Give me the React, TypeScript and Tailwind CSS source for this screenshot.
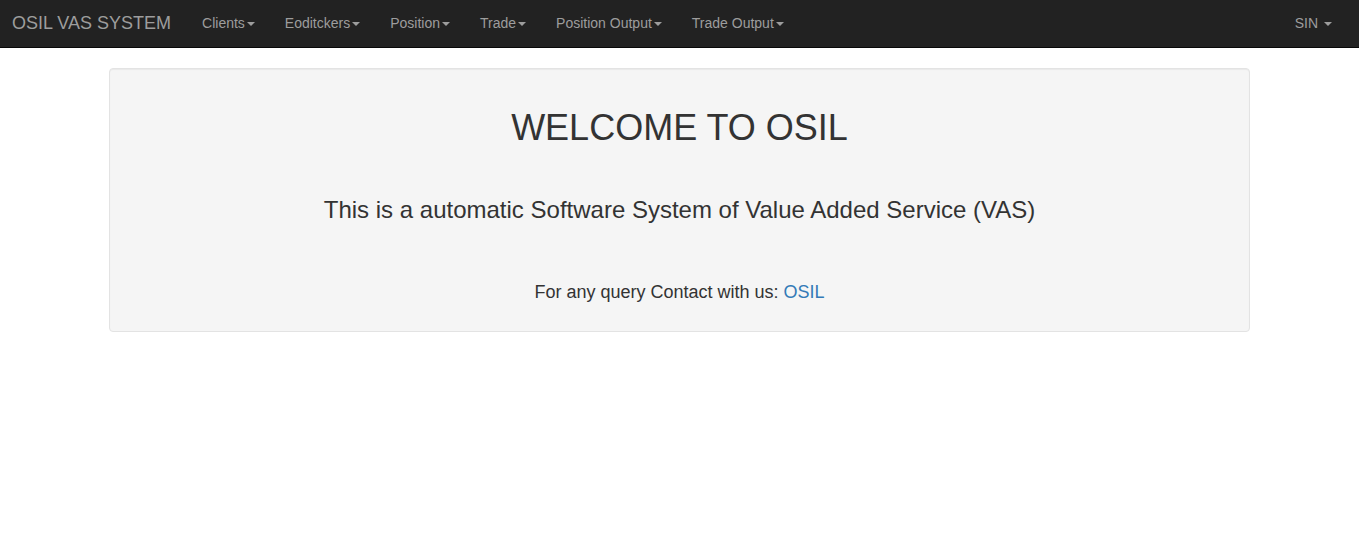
import React from 'react';

const navItems = ['Clients', 'Eoditckers', 'Position', 'Trade', 'Position Output', 'Trade Output'];

const Caret: React.FC = () => (
  <span className="ml-[2px] inline-block h-0 w-0 border-x-4 border-t-4 border-x-transparent border-t-[#9d9d9d] align-middle" />
);

const App: React.FC = () => {
  return (
    <div className="min-h-[543px] bg-white text-[#333] [font-family:'Liberation_Sans',Arial,sans-serif]">
      <nav className="flex h-[48px] items-center border-b border-[#080808] bg-[#222] pb-[2px]">
        <a className="pl-3 pr-[16px] text-[18px] leading-5 text-[#9d9d9d]">OSIL VAS SYSTEM</a>
        <ul className="flex">
          {navItems.map((item) => (
            <li key={item}>
              <a className="block px-[15px] text-[14px] leading-5 text-[#9d9d9d]">
                {item}
                <Caret />
              </a>
            </li>
          ))}
        </ul>
        <a className="ml-auto mr-[27px] block text-[14px] leading-5 text-[#9d9d9d]">
          SIN <Caret />
        </a>
      </nav>

      <div className="mx-auto mt-5 w-[1141px]">
        <div className="rounded border border-[#e3e3e3] bg-[#f5f5f5] p-[19px] text-center shadow-[inset_0_1px_1px_rgba(0,0,0,0.05)]">
          <h1 className="mt-5 text-[36px] leading-[1.1]">WELCOME TO OSIL</h1>
          <h3 className="mt-[49px] text-[24px] leading-[1.1]">
            This is a automatic Software System of Value Added Service (VAS)
          </h3>
          <p className="mb-[9px] mt-[60px] text-[18px] leading-[1.1]">
            For any query Contact with us: <a className="text-[#337ab7]">OSIL</a>
          </p>
        </div>
      </div>
    </div>
  );
};

export default App;
